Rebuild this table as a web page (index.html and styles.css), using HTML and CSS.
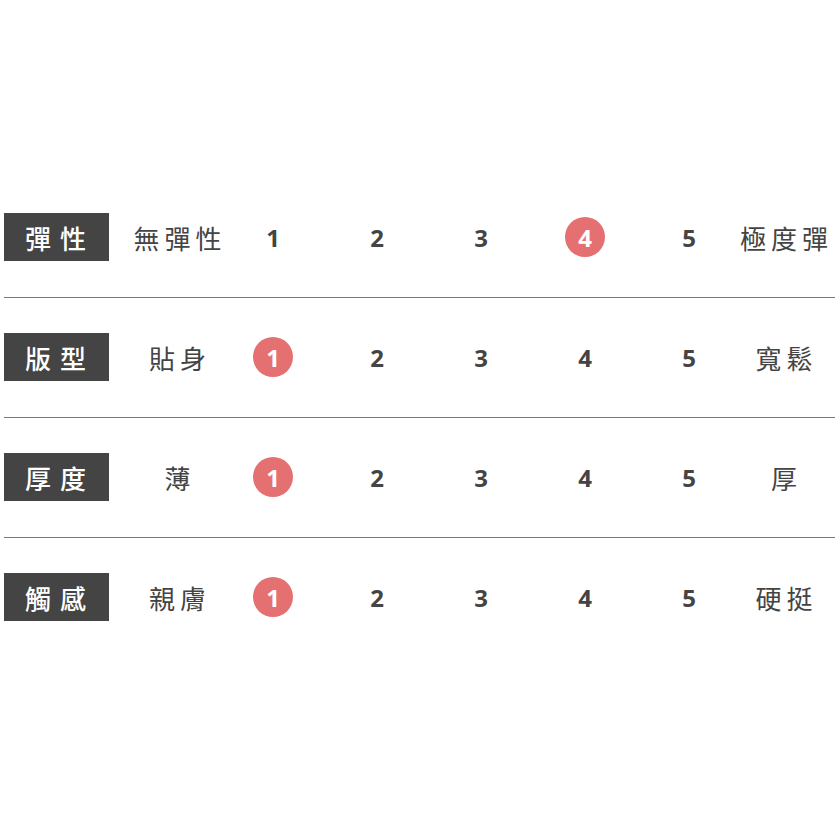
FILE: index.html
```html
<!DOCTYPE html>
<html lang="zh-Hant">
<head>
<meta charset="utf-8">
<link rel="stylesheet" href="styles.css">
</head>
<body>
<div class="chart">
  <div class="row">
    <div class="label">彈性</div>
    <div class="word low">無彈性</div>
    <div class="num">1</div>
    <div class="num">2</div>
    <div class="num">3</div>
    <div class="num"><span class="dot">4</span></div>
    <div class="num">5</div>
    <div class="word high">極度彈</div>
  </div>
  <div class="row">
    <div class="label">版型</div>
    <div class="word low">貼身</div>
    <div class="num"><span class="dot">1</span></div>
    <div class="num">2</div>
    <div class="num">3</div>
    <div class="num">4</div>
    <div class="num">5</div>
    <div class="word high">寬鬆</div>
  </div>
  <div class="row">
    <div class="label">厚度</div>
    <div class="word low">薄</div>
    <div class="num"><span class="dot">1</span></div>
    <div class="num">2</div>
    <div class="num">3</div>
    <div class="num">4</div>
    <div class="num">5</div>
    <div class="word high">厚</div>
  </div>
  <div class="row">
    <div class="label">觸感</div>
    <div class="word low">親膚</div>
    <div class="num"><span class="dot">1</span></div>
    <div class="num">2</div>
    <div class="num">3</div>
    <div class="num">4</div>
    <div class="num">5</div>
    <div class="word high">硬挺</div>
  </div>
</div>
</body>
</html>
```

FILE: styles.css
```css
html, body {
  margin: 0;
  padding: 0;
  background: #ffffff;
}

body {
  font-family: "Noto Sans CJK TC", "Noto Sans", sans-serif;
  color: #444444;
}

.chart {
  width: 831px;
  margin: 178px 0 0 4px;
}

.row {
  display: grid;
  grid-template-columns: 105px 112px repeat(5, 104px) 94px;
  align-items: center;
  height: 48px;
  padding: 35px 0 36px;
  border-bottom: 1px solid #7a7a7a;
}

.row:last-child {
  border-bottom: none;
}

.label {
  height: 48px;
  background: #444444;
  color: #ffffff;
  font-size: 26px;
  font-weight: 500;
  letter-spacing: 9px;
  display: flex;
  align-items: center;
  justify-content: center;
  padding-left: 7px;
  box-sizing: border-box;
}

.word {
  font-size: 26px;
  font-weight: 400;
  letter-spacing: 5px;
  white-space: nowrap;
  display: flex;
  align-items: center;
  justify-content: center;
  height: 48px;
  min-width: 0;
}

.word.low {
  padding-left: 30px;
}

.word.high {
  padding-right: 3px;
}

.num {
  display: flex;
  justify-content: center;
  align-items: center;
  font-family: "Open Sans", "Liberation Sans", sans-serif;
  font-weight: 700;
  font-size: 24px;
  color: #444444;
  height: 48px;
}

.dot {
  width: 40px;
  height: 40px;
  border-radius: 50%;
  background: #e57072;
  color: #ffffff;
  display: flex;
  align-items: center;
  justify-content: center;
}
```
